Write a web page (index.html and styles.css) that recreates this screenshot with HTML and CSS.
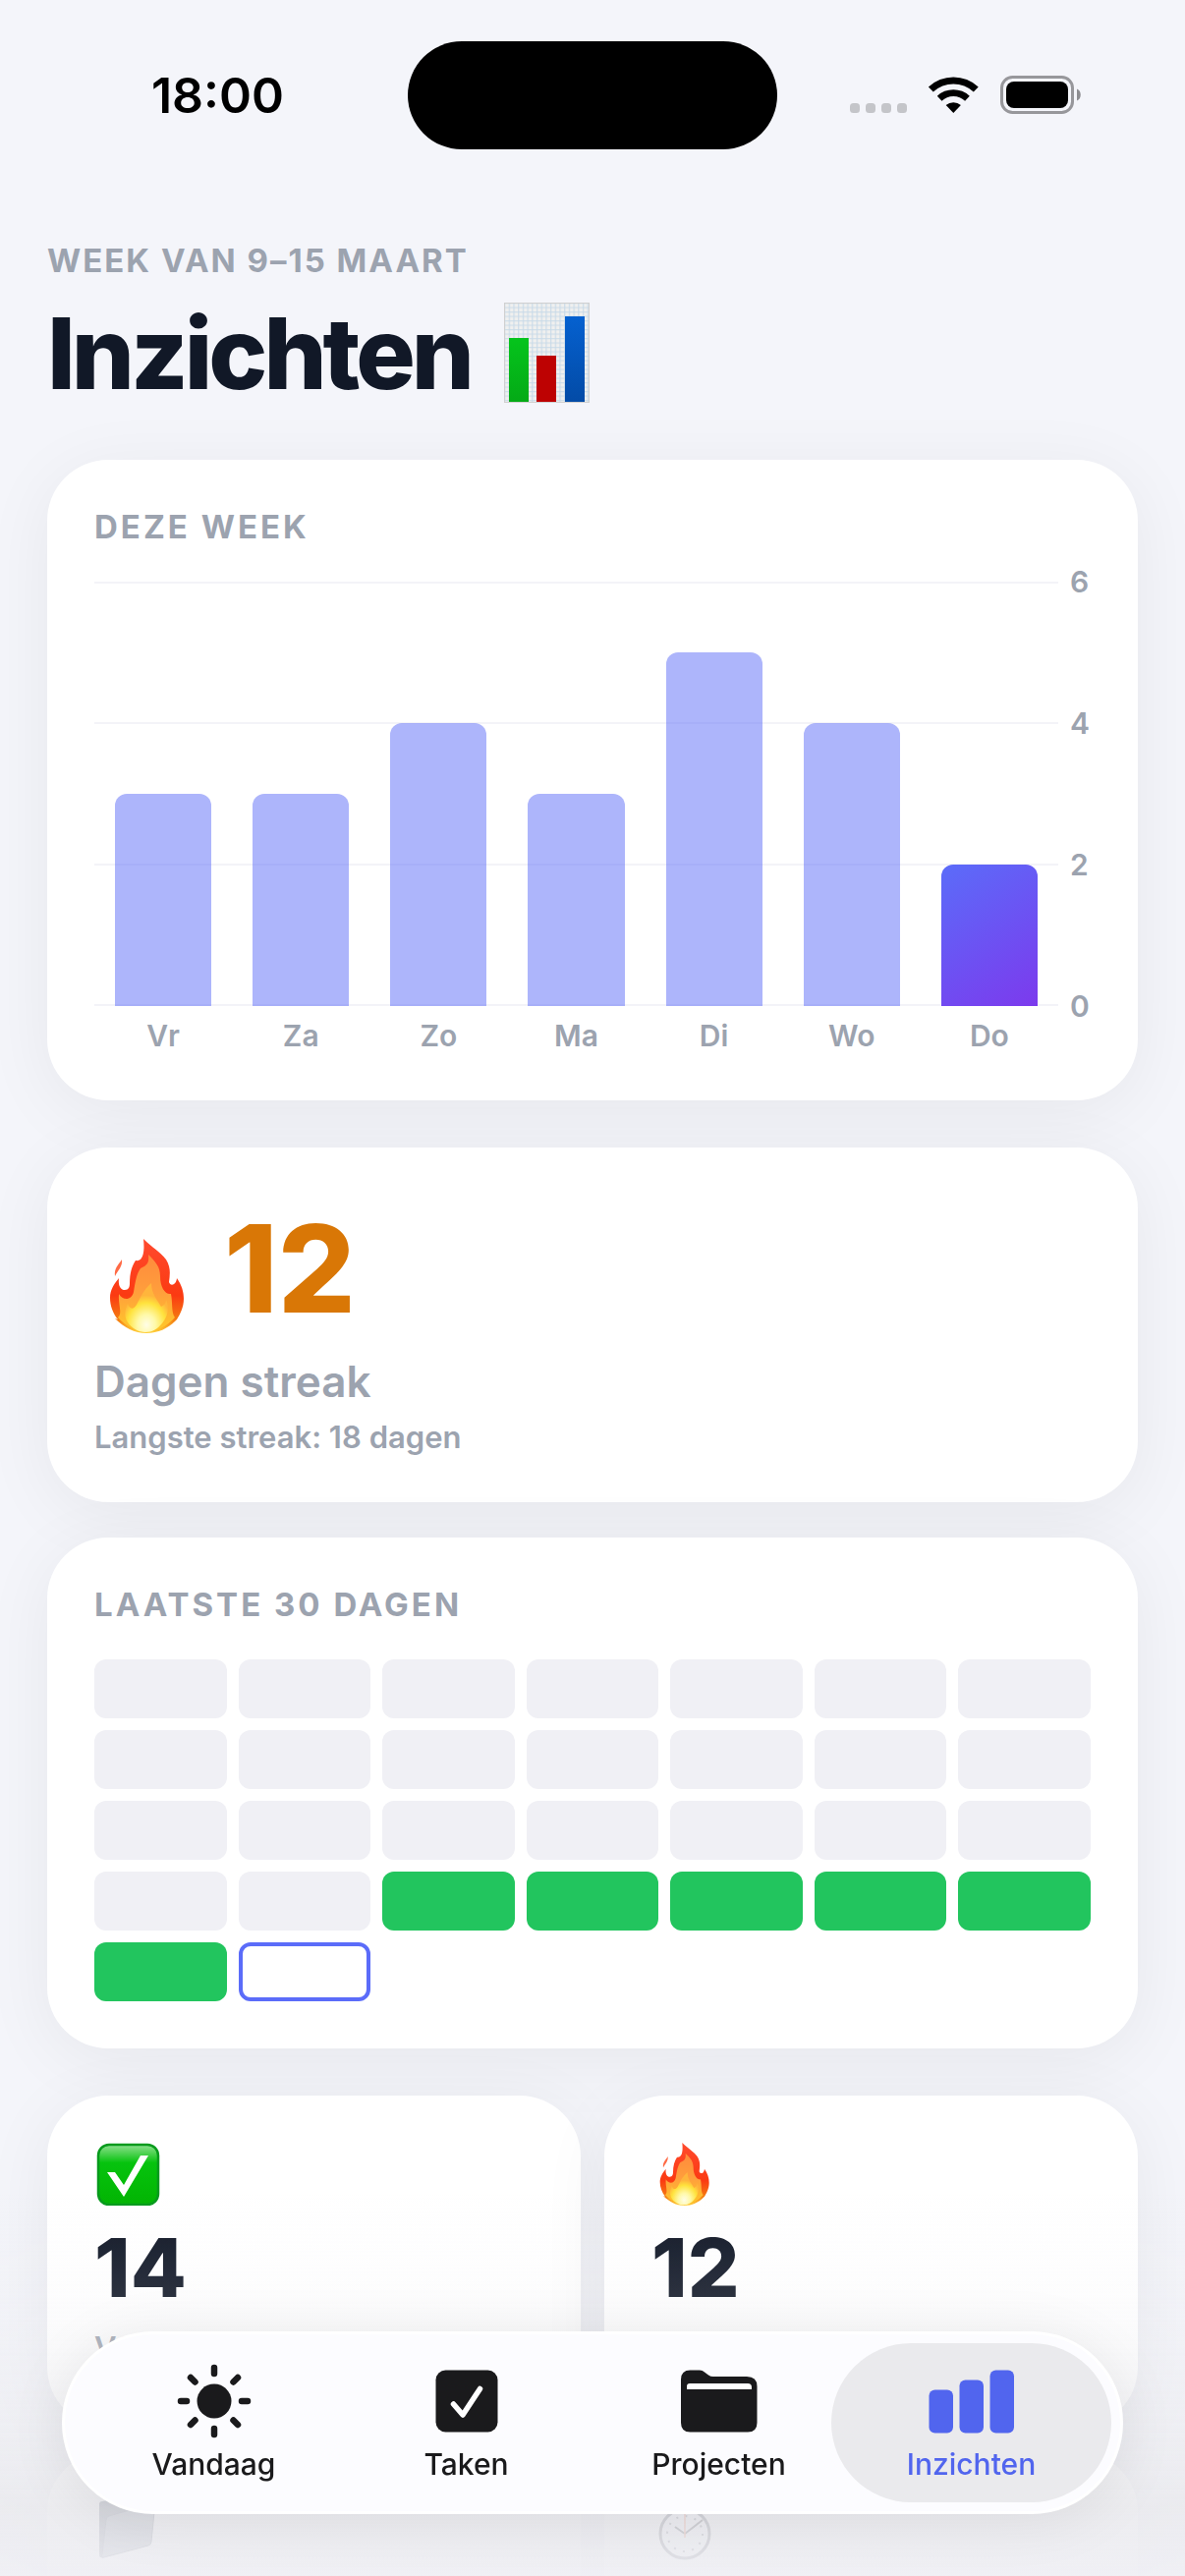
FILE: index.html
```
<!DOCTYPE html>
<html lang="nl">
<head>
  <meta charset="UTF-8" />
  <meta name="viewport" content="width=device-width, initial-scale=1" />
  <title>Inzichten</title>
  <link rel="stylesheet" href="styles.css">
</head>
<body>

  <!-- Vormen die vaker voorkomen -->
  <svg class="defs" aria-hidden="true">
    <defs>
      <linearGradient id="vlamBuiten" x1="0" y1="0" x2="0" y2="1">
        <stop offset="0" stop-color="#ff4a2e" />
        <stop offset="0.6" stop-color="#fb3a12" />
        <stop offset="0.85" stop-color="#f47a10" />
        <stop offset="1" stop-color="#ffd23c" />
      </linearGradient>
      <linearGradient id="vlamMidden" x1="0" y1="0" x2="0" y2="1">
        <stop offset="0" stop-color="#ff8a3c" />
        <stop offset="0.5" stop-color="#ff9f3c" />
        <stop offset="1" stop-color="#ffc928" />
      </linearGradient>
      <radialGradient id="vlamKern" cx="0.5" cy="0.85" r="0.6">
        <stop offset="0" stop-color="#fffde6" />
        <stop offset="0.35" stop-color="#fff9a8" />
        <stop offset="0.75" stop-color="#ffe23c" />
        <stop offset="1" stop-color="#ffb53c" />
      </radialGradient>
      <symbol id="vlam" viewBox="0 0 76 96">
        <path fill="url(#vlamBuiten)" d="M34 0C42 8 52 14 57 21C62 29 61 36 60 44C61 48 67 48 68 40C73 47 75 54 75 61C75 70 71 77 68 82L66 84C59 91 49 96 37 96C25 96 14 90 5 81L8 82C3 76 0 68 0 60C0 52 4 46 9 40C8 48 11 52 15 52C19 52 20 49 20 45C20 35 22 28 26 22C31 23 36 19 34 0Z" />
        <path fill="#ff6a45" d="M12 21C13 28 8 32 5 38C4 30 8 27 12 21Z" />
        <path fill="url(#vlamMidden)" d="M39 16C46 23 51 28 51 38C51 49 56 57 62 56C64 66 62 74 66 80C58 89 48 94 37 94C26 94 16 89 8 80C13 76 8 67 9 56C13 63 22 63 24 54C26 42 27 36 31 30C38 27 40 24 39 16Z" />
        <path fill="url(#vlamKern)" d="M42 45C42 56 48 62 52 69C56 67 57 65 57 62C61 71 58 80 53 86C48 92 43 95 36 95C29 95 22 91 18 85C14 79 15 72 18 66C20 72 24 72 27 67C31 60 33 53 42 45Z" />
      </symbol>
    </defs>
  </svg>

  <div class="app">

    <!-- Statusbalk -->
    <div class="statusbar">
      <span class="tijd">18:00</span>
      <div class="eiland"></div>
      <svg class="status-iconen" width="236" height="40" viewBox="0 0 236 40" aria-hidden="true">
        <g fill="#c4c5c9">
          <rect x="0" y="28" width="10" height="10" rx="3.5" />
          <rect x="16" y="28" width="10" height="10" rx="3.5" />
          <rect x="32" y="28" width="10" height="10" rx="3.5" />
          <rect x="48" y="28" width="10" height="10" rx="3.5" />
        </g>
        <g transform="translate(105.3 38)">
          <path d="M-25.4 -26.5A37 37 0 0 1 25.4 -26.5L20.500 -21.500A30 30 0 0 0 -20.500 -21.500Z" />
          <path d="M-16.500 -17.300A24 24 0 0 1 16.500 -17.300L11.800 -12.300A17 17 0 0 0 -11.800 -12.300Z" />
          <path d="M-7.600 -8A11.500 11.500 0 0 1 7.600 -8L0 0Z" />
        </g>
        <rect x="154.500" y="1.500" width="72" height="36" rx="11" fill="none" stroke="#97979b" stroke-width="3" />
        <rect x="159" y="6" width="63" height="27" rx="8" />
        <path d="M231 13.500C236 15 236 24 231 25.500Z" fill="#8d8d91" />
      </svg>
    </div>

    <main class="inhoud">
      <header class="kop">
        <p class="label">WEEK VAN 9–15 MAART</p>
        <h1 class="titel">
          Inzichten
          <svg width="88" height="102" viewBox="0 0 88 102" role="img" aria-label="Staafdiagram">
            <defs>
              <pattern id="ruitjes" width="4.700" height="4.500" patternUnits="userSpaceOnUse">
                <rect width="4.700" height="4.500" fill="#f0f0ef" />
                <path d="M0 0.700H4.700M0.700 0V4.500" stroke="#c6d9e8" stroke-width="1" />
              </pattern>
              <linearGradient id="groen" x1="0" y1="0" x2="0" y2="1">
                <stop offset="0" stop-color="#05c41c" />
                <stop offset="1" stop-color="#04aa16" />
              </linearGradient>
              <linearGradient id="blauw" x1="0" y1="0" x2="0" y2="1">
                <stop offset="0" stop-color="#0561d0" />
                <stop offset="1" stop-color="#034ba6" />
              </linearGradient>
            </defs>
            <rect x="0.500" y="0.500" width="86" height="101" fill="url(#ruitjes)" stroke="#d0d0d0" />
            <rect x="5" y="36" width="20" height="65" fill="url(#groen)" />
            <rect x="33" y="54" width="20" height="47" fill="#bd0202" />
            <rect x="62" y="14" width="20" height="87" fill="url(#blauw)" />
          </svg>
        </h1>
      </header>

      <!-- Weekgrafiek -->
      <section class="kaart">
        <h2 class="label">DEZE WEEK</h2>
        <div class="grafiek">
          <div class="lijnen">
            <span></span><span></span><span></span>
          </div>
          <div class="staven">
            <span class="staaf" style="height: 50%"></span>
            <span class="staaf" style="height: 50%"></span>
            <span class="staaf" style="height: 66.67%"></span>
            <span class="staaf" style="height: 50%"></span>
            <span class="staaf" style="height: 83.33%"></span>
            <span class="staaf" style="height: 66.67%"></span>
            <span class="staaf vandaag" style="height: 33.33%"></span>
          </div>
          <div class="schaal">
            <span>6</span><span>4</span><span>2</span><span>0</span>
          </div>
          <div class="dagen">
            <span>Vr</span><span>Za</span><span>Zo</span><span>Ma</span><span>Di</span><span>Wo</span><span>Do</span>
          </div>
        </div>
      </section>

      <!-- Streak -->
      <section class="kaart streak">
        <div class="streak-rij">
          <svg class="vlam-groot" width="76" height="96" role="img" aria-label="Vuur"><use href="#vlam" /></svg>
          <span class="streak-getal">12</span>
        </div>
        <p class="streak-naam">Dagen streak</p>
        <p class="klein">Langste streak: 18 dagen</p>
      </section>

      <!-- Laatste 30 dagen -->
      <section class="kaart maand">
        <h2 class="label">LAATSTE 30 DAGEN</h2>
        <div class="rooster">
          <i></i><i></i><i></i><i></i><i></i><i></i><i></i>
          <i></i><i></i><i></i><i></i><i></i><i></i><i></i>
          <i></i><i></i><i></i><i></i><i></i><i></i><i></i>
          <i></i><i></i><i class="vol"></i><i class="vol"></i><i class="vol"></i><i class="vol"></i><i class="vol"></i>
          <i class="vol"></i><i class="nu"></i>
        </div>
      </section>

      <!-- Cijfers -->
      <section class="cijfers">
        <div class="kaart cijfer">
          <svg width="68" height="64" viewBox="0 0 68 64" role="img" aria-label="Voltooid">
            <defs>
              <linearGradient id="vink" x1="0" y1="0" x2="0" y2="1">
                <stop offset="0" stop-color="#8fe08f" />
                <stop offset="0.300" stop-color="#06c30e" />
                <stop offset="1" stop-color="#02b402" />
              </linearGradient>
            </defs>
            <rect x="4" y="2" width="61" height="61" rx="11" fill="url(#vink)" stroke="#079a1c" stroke-width="2.500" />
            <path fill="#fff" d="M13 30H21L30 43L47 13H55L30 55Z" />
          </svg>
          <strong>14</strong>
          <span class="klein">VOLTOOID</span>
        </div>
        <div class="kaart cijfer">
          <svg width="68" height="64" role="img" aria-label="Vuur"><use href="#vlam" /></svg>
          <strong>12</strong>
        </div>
        <div class="kaart cijfer">
          <svg width="68" height="64" viewBox="0 0 68 64" role="img" aria-label="Map">
            <path fill="#5c6678" d="M5 6Q5 3 8 3L24 0L30 6L60 0L58 20L10 60Q5 62 5 57Z" />
            <path fill="#828c9c" stroke="#4b5568" d="M12 22Q12 19 15 18L62 4L58 44Q58 47 55 48L10 60Q7 61 8 57Z" />
          </svg>
        </div>
        <div class="kaart cijfer">
          <svg width="68" height="64" viewBox="0 0 68 64" role="img" aria-label="Stopwatch">
            <path d="M55 8L59 12" stroke="#555" stroke-width="6" stroke-linecap="round" />
            <rect x="29" y="0" width="10" height="8" fill="#777" />
            <circle cx="34" cy="36" r="25" fill="#f5f7fd" stroke="#3d424f" stroke-width="3" />
            <circle cx="34" cy="36" r="18" fill="none" stroke="#4d5360" stroke-width="2" stroke-dasharray="2 7.420" />
            <path d="M34 36L52 22M34 36L24 29" stroke="#10131c" stroke-width="2" />
            <path d="M34 40V14" stroke="#f06030" stroke-width="1.500" />
          </svg>
        </div>
      </section>
    </main>

    <div class="vervaging"></div>

    <!-- Navigatie -->
    <nav class="tabbalk">
      <a class="tab" href="#vandaag">
        <svg width="76" height="76" viewBox="0 0 76 76" aria-hidden="true">
          <circle cx="38" cy="38" r="17.500" fill="currentColor" />
          <path stroke="currentColor" stroke-width="6.500" stroke-linecap="round" d="M38 4V10M38 66V72M4 38H10M66 38H72M14 14L18.500 18.500M57.500 57.500L62 62M14 62L18.500 57.500M57.500 18.500L62 14" />
        </svg>
        Vandaag
      </a>
      <a class="tab" href="#taken">
        <svg width="76" height="76" viewBox="0 0 76 76" aria-hidden="true">
          <rect x="6.500" y="6.500" width="63" height="63" rx="10" fill="currentColor" />
          <path fill="none" stroke="#fff" stroke-width="5.500" stroke-linecap="round" stroke-linejoin="round" d="M24.500 41L34 52L51.500 25.500" />
        </svg>
        Taken
      </a>
      <a class="tab" href="#projecten">
        <svg width="80" height="76" viewBox="0 0 80 76" aria-hidden="true">
          <path fill="currentColor" d="M1 16Q1 6.500 10.500 6.500H20Q23 6.500 25 8.500L29 11.500Q31 13 34 13H68Q78.500 13 78.500 23V60Q78.500 69.500 69 69.500H10.500Q1 69.500 1 60Z" />
          <path fill="#fff" d="M7 26V23Q7 20 10 20H69Q73 20 73 24V26Z" />
        </svg>
        Projecten
      </a>
      <a class="tab actief" href="#inzichten">
        <svg width="88" height="76" viewBox="0 0 88 76" aria-hidden="true">
          <g fill="currentColor">
            <rect x="0.500" y="26.500" width="24.500" height="44" rx="6" />
            <rect x="31.500" y="16.500" width="24.500" height="54" rx="6" />
            <rect x="62.500" y="6.500" width="24.500" height="64" rx="6" />
          </g>
        </svg>
        Inzichten
      </a>
    </nav>

  </div>

</body>
</html>
```

FILE: styles.css
```
* {
  box-sizing: border-box;
}

body {
  margin: 0;
  background: #f4f5fa;
  font-family: Inter, "Liberation Sans", sans-serif;
  color: #111827;
}

h1, h2, p {
  margin: 0;
}

.defs {
  position: absolute;
  width: 0;
  height: 0;
}

.app {
  height: 100vh;
  overflow: hidden;
}

/* Statusbalk */
.statusbar {
  display: grid;
  grid-template-columns: 1fr 376px 1fr;
  align-items: center;
  padding-top: 42px;
  color: #000;
}

.tijd {
  justify-self: center;
  padding-left: 28px;
  font-size: 50px;
  line-height: 60px;
  font-weight: 600;
}

.eiland {
  height: 110px;
  border-radius: 55px;
  background: #000;
}

.status-iconen {
  justify-self: center;
  margin-left: -32px;
}

/* Inhoud */
.inhoud {
  padding: 93px 48px 0;
}

.kop {
  margin-bottom: 49px;
}

.label {
  font-size: 33px;
  line-height: 40px;
  font-weight: 700;
  letter-spacing: 2px;
  color: #9ca3af;
}

.kaart .label {
  margin-bottom: 36px;
  letter-spacing: 3px;
}

.titel {
  display: flex;
  align-items: center;
  gap: 34px;
  margin-top: 14px;
  font-size: 101px;
  line-height: 120px;
  font-weight: 800;
  letter-spacing: -4px;
}

.kaart {
  margin-bottom: 48px;
  padding: 48px;
  border-radius: 62px;
  background: #fff;
  box-shadow: 0 12px 72px rgba(0, 0, 0, 0.06);
}

/* Grafiek */
.grafiek {
  display: grid;
  grid-template-columns: 1fr 33px;
  grid-template-rows: 432px 36px;
  row-gap: 12px;
  font-size: 30px;
  line-height: 36px;
  font-weight: 600;
  color: #9ca3af;
}

.lijnen,
.staven {
  grid-area: 1 / 1;
}

.lijnen {
  display: grid;
  grid-template-rows: repeat(3, 1fr);
  border-bottom: 2px solid #f3f3f8;
}

.lijnen span {
  border-top: 2px solid #f3f3f8;
}

.staven {
  display: grid;
  grid-template-columns: repeat(7, 1fr);
  align-items: end;
  justify-items: center;
}

.staaf {
  width: 70%;
  border-radius: 12px 12px 0 0;
  background: rgba(91, 108, 247, 0.5);
}

.staaf.vandaag {
  background: linear-gradient(145deg, #5b6cf9, #7c3aed);
}

.schaal {
  display: flex;
  flex-direction: column;
  justify-content: space-between;
  margin: -18px 0;
  padding-left: 12px;
}

.dagen {
  display: grid;
  grid-template-columns: repeat(7, 1fr);
  text-align: center;
}

/* Streak */
.streak {
  margin-bottom: 36px;
}

.streak-rij {
  display: flex;
  align-items: flex-end;
  gap: 40px;
  padding-left: 16px;
}

.vlam-groot {
  margin-bottom: 10px;
}

.streak-getal {
  font-size: 124px;
  line-height: 151px;
  font-weight: 800;
  color: #d97706;
}

.streak-naam {
  margin: 12px 0;
  font-size: 44px;
  line-height: 54px;
  font-weight: 600;
  color: #9ca3af;
}

.klein {
  font-size: 31px;
  line-height: 36px;
  font-weight: 600;
  color: #9ca3af;
}

/* Rooster van 30 dagen */
.rooster {
  display: grid;
  grid-template-columns: repeat(7, 1fr);
  grid-auto-rows: 60px;
  gap: 12px;
}

.rooster i {
  border-radius: 12px;
  background: #f0f0f5;
}

.rooster .vol {
  background: #22c55e;
}

.rooster .nu {
  border: 4px solid #5b6cf9;
  background: #fff;
}

/* Cijfers */
.cijfers {
  display: grid;
  grid-template-columns: 1fr 1fr;
  grid-auto-rows: 338px;
  gap: 24px;
}

.cijfer {
  display: flex;
  flex-direction: column;
  align-items: flex-start;
  margin: 0;
}

.cijfer strong {
  margin: 15px 0;
  font-size: 83px;
  line-height: 97px;
  font-weight: 800;
}

/* Verloop achter de tabbalk */
.vervaging {
  position: fixed;
  left: 0;
  right: 0;
  bottom: 0;
  height: 390px;
  background: linear-gradient(rgba(238, 238, 243, 0), rgba(236, 236, 241, 0.12) 27%, rgba(236, 236, 240, 0.3) 42%, rgba(233, 233, 237, 0.85) 82%, rgba(239, 239, 244, 0.95));
}

/* Tabbalk */
.tabbalk {
  position: fixed;
  left: 63px;
  right: 63px;
  bottom: 63px;
  display: flex;
  padding: 9px;
  border: 3px solid #fff;
  border-radius: 93px;
  background: #fcfcff;
  box-shadow: 0 6px 60px rgba(0, 0, 0, 0.08);
}

.tab {
  flex: 1;
  display: flex;
  flex-direction: column;
  align-items: center;
  gap: 8px;
  padding: 21px 0;
  border-radius: 81px;
  font-size: 30px;
  line-height: 36px;
  font-weight: 500;
  color: #1a1a1c;
  text-decoration: none;
}

/* De tabs schuiven iets over elkaar, zoals de actieve pil */
.tab + .tab {
  margin-left: -28px;
}

.tab.actief {
  background: #eaeaed;
  color: #5165ee;
}
```
